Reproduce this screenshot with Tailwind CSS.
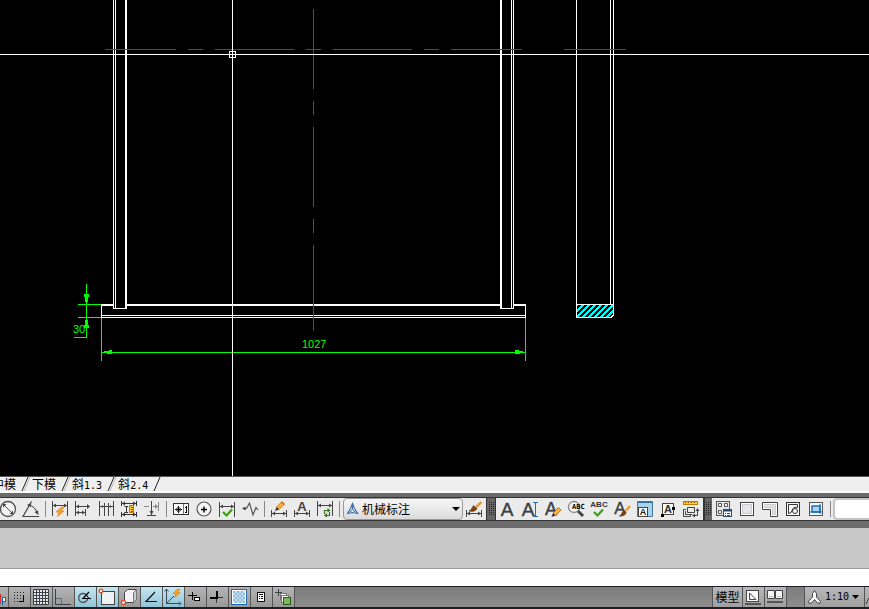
<!DOCTYPE html>
<html lang="zh">
<head>
  <meta charset="UTF-8">
  <title>CAD</title>
  <script src="https://cdn.jsdelivr.net/npm/@tailwindcss/browser@4"></script>
</head>
<body class="h-screen flex flex-col overflow-hidden bg-[#6b6b6b] text-black text-xs font-['Noto_Sans_CJK_SC',sans-serif]">

  <!-- Drawing area -->
  <main class="flex-1 min-h-0 bg-black overflow-hidden">
    <svg class="block w-full h-full" fill="none" shape-rendering="crispEdges">
      <defs>
        <pattern id="hatch" width="6" height="6" patternUnits="userSpaceOnUse">
          <path d="M-1 7L7 -1M-1 1L1 -1M5 7L7 5" stroke="#00ffff" stroke-width="1.500"/>
        </pattern>
      </defs>

      <!-- frame -->
      <g stroke="#fff">
        <path d="M113.5 0V308.5H126M115.5 0V308M511.5 0V308M513.5 0V308.5H501"/>
        <path d="M126 0V309M501 0V309M101 305H113M127 305H500M514 305H526" stroke-width="2"/>
        <path d="M101.5 304V317.5H525.5V304M101 315.5H525"/>
      </g>

      <!-- side section -->
      <rect x="577" y="305" width="36" height="12" fill="url(#hatch)"/>
      <path d="M576.5 0V317.5H611L613.5 315V0M610.5 0V304M576 304.5H613" stroke="#fff"/>

      <!-- centre lines -->
      <g stroke="#e01010">
        <path d="M105 49.5H176M188 49.5H203M215 49.5H294M306 49.5H321M333 49.5H412M424 49.5H439M451 49.5H522M564 49.5H626"/>
        <path d="M313.5 9V89M313.5 101V115M313.5 127V207M313.5 219V233M313.5 245V331"/>
      </g>

      <!-- dimensions -->
      <g stroke="#00ff00">
        <path d="M86.5 284V337.5H74M78 304.5H101M78 317.5H101M101.5 318V361M525.5 318V361M101 352.5H525"/>
      </g>
      <g fill="#00ff00">
        <path d="M84 294h5v3h-1v5h-3v-5h-1zM85 320h3v5h1v3h-5v-3h1z"/>
        <path d="M104 351h5v-1h3v4h-5v-1h-3zM523 351h-4v-1h-4v4h5v-1h3z"/>
      </g>
      <g fill="#00ff00" font-family="'Liberation Sans Narrow', 'Liberation Sans', sans-serif" font-size="11">
        <text x="73" y="333">30</text>
        <text x="302" y="348">1027</text>
      </g>

      <!-- crosshair -->
      <g stroke="#fff">
        <line x1="0" y1="54.5" x2="100%" y2="54.5"/>
        <line x1="232.5" y1="0" x2="232.5" y2="100%"/>
        <rect x="229.5" y="51.5" width="6" height="6"/>
      </g>
    </svg>
  </main>

  <!-- Layout tabs -->
  <nav class="h-[17px] shrink-0 flex items-center bg-[#efefef] border-t border-[#555] border-b-2 border-b-white leading-none overflow-hidden">
    <a href="#" class="-ml-2">中模</a>
    <svg class="w-4 h-[14px]" fill="none"><path d="M6 14L12 0" stroke="#222"/><path d="M8 14L14 0" stroke="#bbb"/></svg>
    <a href="#">下模</a>
    <svg class="w-4 h-[14px]" fill="none"><path d="M6 14L12 0" stroke="#222"/><path d="M8 14L14 0" stroke="#bbb"/></svg>
    <a href="#">斜<span class="text-[10px] font-['DejaVu_Sans_Mono',monospace]">1.3</span></a>
    <svg class="w-4 h-[14px]" fill="none"><path d="M6 14L12 0" stroke="#222"/><path d="M8 14L14 0" stroke="#bbb"/></svg>
    <a href="#">斜<span class="text-[10px] font-['DejaVu_Sans_Mono',monospace]">2.4</span></a>
    <svg class="w-4 h-[14px]" fill="none"><path d="M6 14L12 0" stroke="#222"/></svg>
  </nav>

  <!-- Toolbars -->
  <div class="h-6 mt-1 mb-[7px] shrink-0 flex overflow-hidden border-y border-[#333]">

    <!-- dimension toolbar -->
    <div role="toolbar" aria-label="标注" class="flex shrink-0 bg-[#ebebeb] border-r border-[#333]">
      <button aria-label="直径" class="-ml-1 w-[23px]"><svg class="block" width="23" height="22" fill="none" stroke="#555"><circle cx="12" cy="11" r="7.5" fill="#f4f4f4" stroke-width="1.3"/><path d="M7.5 6.5L16.5 15.5"/><path d="M7 6h3.5L7 9.500zM17 16h-3.500L17 12.500z" fill="#444" stroke="none"/></svg></button>
      <button aria-label="角度" class="w-[23px]"><svg class="block" width="23" height="22" fill="none" stroke="#444"><path d="M20 18.500H4L12.500 3.500" stroke-width="1.200"/><path d="M9.500 7Q16 8 18.500 15.500"/><path d="M8 7l4-2v4zM19.500 17l-4-3 3.500-1.500z" fill="#444" stroke="none"/></svg></button>
      <span class="w-px ml-[3px] mr-[2px] my-[3px] bg-[#888]"></span>
      <button aria-label="快速标注" class="w-[23px]"><svg class="block" width="23" height="22" fill="none" stroke="#444"><path d="M4.500 3V18M19.500 3V18M5 7.500H19"/><path d="M5 7.500l3-2v4zM19 7.500l-3-2v4z" fill="#444" stroke="none"/><path d="M13.500 9L8 14h3l-1.500 4.500L16 13h-3l3-4z" fill="#ffa51f" stroke="#e07000" stroke-width=".6"/></svg></button>
      <button aria-label="基线" class="w-[23px]"><svg class="block" width="23" height="22" fill="none" stroke="#444"><path d="M4.500 3V18M5 8.500H17M5 14.500H14M14.500 11V18"/><path d="M5 8.500l3-2v4zM19 8.500l-3-2.500v5zM5 14.500l3-2v4zM14 14.500l-3-2v4z" fill="#444" stroke="none"/></svg></button>
      <button aria-label="连续" class="w-[23px]"><svg class="block" width="23" height="22" fill="none" stroke="#444"><path d="M5.500 3V18M10.500 5V18M14.500 5V18M19.500 3V18M5 8.500H19"/><path d="M10 8.500l-2-1.500v3zM15 8.500l2-1.500v3z" fill="#444" stroke="none"/></svg></button>
      <button aria-label="标注间距" class="w-[23px]"><svg class="block" width="23" height="22" fill="none" stroke="#333"><path d="M4.500 3V8M19.500 3V8M5 5.500H19M4.500 14V19M19.500 14V19M5 16.500H19M7.500 8.500H11M9.500 8.500V14M7.500 14.500H11"/><path d="M5 5.500l3-2v4zM19 5.500l-3-2v4zM5 16.500l3-2v4zM19 16.500l-3-2v4z" fill="#333" stroke="none"/><rect x="12.500" y="7.500" width="4" height="7" fill="#ffc61a" stroke="#c07a00"/><path d="M14 9.500h2M14 11.500h2M14 13.500h2" stroke="#815000"/></svg></button>
      <button aria-label="折断标注" class="w-[23px]"><svg class="block" width="23" height="22" fill="none" stroke="#888"><path d="M4 8.500H9M13 8.500H18M18.500 4V13"/><path d="M18 8.500l-3-2.500v5z" fill="#888" stroke="none"/><path d="M11.500 3V17M7 17.500H16" stroke="#444"/><path d="M11.500 17l-2-4h4z" fill="#444" stroke="none"/></svg></button>
      <span class="w-px ml-[3px] mr-[2px] my-[3px] bg-[#888]"></span>
      <button aria-label="公差" class="w-[23px]"><svg class="block" width="23" height="22" fill="none" stroke="#333"><rect x="4.500" y="5.500" width="15" height="11" fill="#fafafa"/><path d="M14.500 6V16" stroke="#777"/><path d="M6 11.500H13M9.500 8V15" stroke="#000"/><circle cx="9.500" cy="11.500" r="2"/><path d="M16 14.500h1M17.500 8V15M16 9.500h1" stroke="#000"/></svg></button>
      <button aria-label="圆心标记" class="w-[23px]"><svg class="block" width="23" height="22" fill="none"><circle cx="12" cy="11" r="7" fill="#f4f4f4" stroke="#555" stroke-width="1.200"/><path d="M9 11.500H15M12 8.500V14.500" stroke="#000" stroke-width="1.400"/></svg></button>
      <button aria-label="检验" class="w-[23px]"><svg class="block" width="23" height="22" fill="none" stroke="#444"><path d="M4.500 4V19M19.500 4V19M5 8.500H19"/><path d="M5 8.500l3-2v4zM19 8.500l-3-2v4z" fill="#444" stroke="none"/><path d="M8 14l3.500 3.500L17 11.500" stroke="#3aa010" stroke-width="2.200"/></svg></button>
      <button aria-label="折弯线性" class="w-[23px]"><svg class="block" width="23" height="22" fill="none" stroke="#555"><path d="M6 10.500H8.500L11.500 5L15 17L18 9.500L20 12" stroke-width="1.200"/><path d="M4 10.500l3.500-2v4z" fill="#444" stroke="none"/></svg></button>
      <span class="w-px ml-[3px] mr-[2px] my-[3px] bg-[#888]"></span>
      <button aria-label="编辑标注" class="w-[23px]"><svg class="block" width="23" height="22" fill="none" stroke="#444"><path d="M4.500 12V19M19.500 12V19M5 15.500H19"/><path d="M5 15.500l3-2v4zM19 15.500l-3-2v4z" fill="#444" stroke="none"/><path d="M9.500 9L15 3.500l2.500 2.500L12 11.500z" fill="#ffb13b" stroke="#b06a10" stroke-width=".8"/><path d="M9.500 9L8 13l4-1.500z" fill="#333" stroke="none"/><path d="M14.500 4l2.500 2.500" stroke="#b53a20"/></svg></button>
      <button aria-label="编辑标注文字" class="w-[23px]"><svg class="block" width="23" height="22" fill="none" stroke="#444"><path d="M4.500 12V19M19.500 12V19M5 15.500H19"/><path d="M5 15.500l3-2v4zM19 15.500l-3-2v4z" fill="#444" stroke="none"/><text x="12" y="13" text-anchor="middle" font-family="Liberation Sans" font-weight="bold" font-size="13" fill="#444" stroke="none">A</text></svg></button>
      <button aria-label="标注更新" class="w-[23px]"><svg class="block" width="23" height="22" fill="none" stroke="#444"><path d="M4.500 3V18M19.500 3V18M5 7.500H19"/><path d="M5 7.500l3-2v4zM19 7.500l-3-2v4z" fill="#444" stroke="none"/><path d="M11.500 16V12.500H15M13 17.500H16.500V14" stroke="#35701a" stroke-width="1.200"/><path d="M14.500 10l3 2.500-3 2zM14 15l-3 2.500 3 2z" fill="#35701a" stroke="none"/></svg></button>
      <span class="w-px ml-[3px] mr-[3px] my-[3px] bg-[#888]"></span>
      <div class="relative w-[120px]">
        <select aria-label="标注样式" class="block appearance-none w-full h-[22px] pl-[18px] border border-[#999] rounded-sm bg-linear-to-b from-[#f6f6f6] to-[#dcdcdc] text-xs leading-4">
          <option>机械标注</option>
        </select>
        <svg class="absolute left-1 top-1 pointer-events-none" width="14" height="14" fill="none" stroke="#3a6ea5"><path d="M5.500 1.500L3.500 6.500L.5 11.500L5.500 10.500L10.500 11.500L7.500 6.500Z" fill="#dcebf7" stroke-width="1.200"/><path d="M5.500 4V7.500L3 10M5.500 7.500L8 10"/></svg>
        <svg class="absolute right-[3px] top-[9px] pointer-events-none" width="8" height="4"><path d="M0 0H8L4 4z"/></svg>
      </div>
      <button aria-label="标注样式管理" class="w-[23px]"><svg class="block" width="23" height="22" fill="none" stroke="#444"><path d="M3.500 12V19M18.500 12V19M4 15.500H18"/><path d="M4 15.500l3-2v4zM18 15.500l-3-2v4z" fill="#444" stroke="none"/><path d="M18.500 4L13 9" stroke="#e39a3b" stroke-width="2.600"/><path d="M10.500 7.500l3.500 3q-2 4-8 2.500 2.500-1 4.500-5.500z" fill="#7a4318" stroke="#5b2e0c" stroke-width=".6"/></svg></button>
    </div>

    <span class="w-[9px] shrink-0 flex items-center justify-center bg-[#666] border-r border-[#333]"><svg width="5" height="16" stroke="#222" stroke-width="1"><path d="M.5 1V14M2.500 1V14M4.500 1V14" stroke-dasharray="1 1"/></svg></span>

    <!-- text toolbar -->
    <div role="toolbar" aria-label="文字" class="flex shrink-0 bg-[#ebebeb]">
      <button aria-label="多行文字" class="w-[23px]"><svg class="block" width="23" height="22"><text x="11" y="18" text-anchor="middle" font-family="Liberation Sans" font-size="19" fill="#3a3f44" stroke="#3a3f44" stroke-width=".4">A</text></svg></button>
      <button aria-label="单行文字" class="w-[23px]"><svg class="block" width="23" height="22" fill="none"><text x="9" y="18" text-anchor="middle" font-family="Liberation Sans" font-size="19" fill="#3a3f44" stroke="#3a3f44" stroke-width=".4">A</text><path d="M14 4.500H19M14 18.500H19M16.500 5V18" stroke="#1f6fb8"/></svg></button>
      <button aria-label="编辑文字" class="w-[23px]"><svg class="block" width="23" height="22"><text x="9" y="17" text-anchor="middle" font-family="Liberation Sans" font-size="18" fill="#3a3f44" stroke="#3a3f44" stroke-width=".4">A</text><path d="M11 15L16.500 9.500l2.500 2.500L13.500 17.500z" fill="#ffb13b" stroke="#9a5a10" stroke-width=".8"/><path d="M11 15L9.500 19l4-1.500z" fill="#333"/></svg></button>
      <button aria-label="查找" class="w-[23px]"><svg class="block" width="23" height="22" fill="none"><circle cx="9" cy="9" r="5.500" fill="#f4f8fb" stroke="#888" stroke-width="1.300"/><path d="M13 13L18 18" stroke="#444" stroke-width="3"/><text x="7" y="11" font-family="DejaVu Sans Mono" font-weight="bold" font-size="7" fill="#000">ABC</text></svg></button>
      <button aria-label="拼写检查" class="w-[23px]"><svg class="block" width="23" height="22" fill="none"><text x="11" y="9" text-anchor="middle" font-family="Liberation Sans" font-weight="bold" font-size="8" fill="#333">ABC</text><path d="M6 14l3.500 3.500L15 11.500" stroke="#3aa010" stroke-width="2.200"/></svg></button>
      <button aria-label="文字样式" class="w-[23px]"><svg class="block" width="23" height="22"><text x="9" y="16" text-anchor="middle" font-family="Liberation Sans" font-size="17" fill="#3a3f44" stroke="#3a3f44" stroke-width=".4">A</text><path d="M19 8L15 12.500" stroke="#e39a3b" stroke-width="2.400"/><path d="M12.500 11.500l3 2.500q-1 5-8 4.500 3-2 5-7z" fill="#7a4318"/></svg></button>
      <button aria-label="缩放文字" class="w-[23px]"><svg class="block" width="23" height="22"><path d="M3.500 3.500H18.500V18.500H3.500z" fill="#a9d3ea" stroke="#47799b"/><path d="M4 4.500H18" stroke="#2f6f9a"/><rect x="4.500" y="9.500" width="9" height="9" fill="#fff" stroke="#444"/><text x="9" y="17" text-anchor="middle" font-family="Liberation Sans" font-weight="bold" font-size="9" fill="#222">A</text></svg></button>
      <button aria-label="对正文字" class="w-[23px]"><svg class="block" width="23" height="22"><rect x="5.500" y="5.500" width="11" height="11" fill="#f8f8f8" stroke="#444"/><text x="11" y="15" text-anchor="middle" font-family="Liberation Sans" font-weight="bold" font-size="11" fill="#333">A</text><path d="M4 16h3v3h-3zM15 9h3v3h-3z"/></svg></button>
      <button aria-label="空间转换" class="w-[23px]"><svg class="block" width="23" height="22" fill="none"><rect x="3.500" y="3.500" width="14" height="3" fill="#ffcf2e" stroke="#c27a00"/><path d="M5.500 4v1M8.500 4v1M11.500 4v1M14.500 4v1" stroke="#754700"/><path d="M6 11.500H3.500V18.500H10.500V16M5.500 13V16.500H12M7.500 9.500H14.500V14.500H7.500zM17.500 12V17.500H14" stroke="#444"/><path d="M17.500 10l2 3h-4zM12 17.500l3-2v4z" fill="#444"/></svg></button>
    </div>

    <span class="w-[9px] shrink-0 flex items-center justify-center bg-[#666] border-l-2 border-[#333]"><svg width="5" height="16" stroke="#222" stroke-width="1"><path d="M.5 1V14M2.500 1V14M4.500 1V14" stroke-dasharray="1 1"/></svg></span>

    <!-- viewport toolbar -->
    <div role="toolbar" aria-label="视口" class="flex flex-1 min-w-0 bg-[#ebebeb]">
      <button aria-label="视口对话框" class="w-[23px] shrink-0"><svg class="block" width="23" height="22" fill="#fafafa" stroke="#555"><rect x="4.500" y="3.500" width="13" height="14" fill="#e6e6e6"/><path d="M6.500 5.500h3v3h-3zM12.500 5.500h3v3h-3zM6.500 12.500h3v3h-3z"/><rect x="11.500" y="11.500" width="8" height="7" stroke="#2d4d70"/><path d="M11 12.500H20" stroke="#2d4d70" stroke-width="2"/><path d="M13 15.500h1M15 15.500h3M13 17.500h1M15 17.500h3" stroke="#444"/></svg></button>
      <button aria-label="单个视口" class="w-[23px] shrink-0"><svg class="block" width="23" height="22"><rect x="5.500" y="4.500" width="13" height="13" fill="#fff" stroke="#444"/><rect x="7.500" y="6.500" width="9" height="9" fill="#e4e6ea" stroke="#ccc"/></svg></button>
      <button aria-label="多边形视口" class="w-[23px] shrink-0"><svg class="block" width="23" height="22"><path d="M4.500 4.500H19.500V18.500H12.500V11.500H4.500z" fill="#fff" stroke="#444"/><path d="M6.500 6.500H17.500V16.500H14.500V9.500H6.500z" fill="#dde0e5" stroke="#ccc"/></svg></button>
      <button aria-label="将对象转换为视口" class="w-[23px] shrink-0"><svg class="block" width="23" height="22" fill="none" stroke="#333"><rect x="5.500" y="4.500" width="13" height="13" fill="#fafafa"/><path d="M7.500 15.500V6.500H16.500V9.500Q12 8.500 11 12.500Q10.500 15.500 7.500 15.500z"/><circle cx="14" cy="13" r="2.500"/></svg></button>
      <button aria-label="裁剪现有视口" class="w-[23px] shrink-0"><svg class="block" width="23" height="22" fill="none"><rect x="5.500" y="4.500" width="13" height="13" fill="#fafafa" stroke="#555"/><rect x="8" y="8" width="8" height="6" fill="#a8d4f0" stroke="#1266b0" stroke-width="1.400"/><path d="M6 14H18M16 6V16" stroke="#1266b0"/></svg></button>
      <span class="w-px ml-[3px] mr-[2px] my-[3px] bg-[#888] shrink-0"></span>
      <input type="text" aria-label="视口比例" class="h-[22px] flex-1 min-w-0 -mr-1 bg-white border-2 border-[#c4c4c4] rounded-sm">
    </div>
  </div>

  <!-- Command window -->
  <div class="h-[41px] shrink-0 bg-[#c8c8c8] border-b border-[#999]"></div>
  <input type="text" aria-label="命令" class="block w-full h-[17px] shrink-0 bg-white outline-none">

  <!-- Status bar -->
  <footer class="h-[23px] shrink-0 flex justify-between overflow-hidden border-t border-b-2 border-[#1c1f24] bg-linear-to-b from-[#7c7c7c] to-[#8e8e8e]">
    <div class="flex -ml-[13px]">
      <button aria-label="推断约束" class="w-[22px] border-r border-[#555] bg-linear-to-b from-[#b4b4b4] to-[#989898]"><svg class="block" width="22" height="20" fill="none"><path d="M12 9.500H15M13.500 7V17" stroke="#c33"/><path d="M15.500 10.500h3v4h-3zM15.500 14V18" stroke="#1266b0" fill="#fff"/></svg></button>
      <button aria-label="捕捉" class="w-[22px] border-r border-[#555] bg-linear-to-b from-[#b4b4b4] to-[#989898]"><svg class="block" width="22" height="20" fill="none" stroke="#222"><path d="M5 5.500H15M5 8.500H13M5 11.500H13M5 14.500H9" stroke-dasharray="1 2"/><path d="M14.500 8V15M10 14.500H15" stroke="#000"/></svg></button>
      <button aria-label="栅格" class="w-[22px] border-r border-[#555] bg-linear-to-b from-[#b4b4b4] to-[#989898]"><svg class="block" width="22" height="20" fill="#e8e8e8" stroke="#3b3f47"><path d="M2.500 2.500h15v15h-15zM5.500 2v16M8.500 2v16M11.500 2v16M14.500 2v16M2 5.500h16M2 8.500h16M2 11.500h16M2 14.500h16"/></svg></button>
      <button aria-label="正交" class="w-[22px] border-r border-[#555] bg-linear-to-b from-[#b4b4b4] to-[#989898]"><svg class="block" width="22" height="20" fill="none" stroke="#3b3f47"><path d="M2.500 2V17.500H18"/><path d="M3 11.500H8.500V17" stroke="#667"/></svg></button>
      <button aria-label="极轴" class="w-[22px] border-r border-[#555] bg-linear-to-b from-[#c5e6f1] to-[#8fc4d6]"><svg class="block" width="22" height="20" fill="none"><path d="M11 7.500A4.500 4.500 0 1 0 12.500 12" stroke="#555" stroke-width="1.400"/><path d="M14 5L8 11.500H16" stroke="#000" stroke-width="1.200"/><path d="M11 7.500l3 4" stroke="#000"/></svg></button>
      <button aria-label="对象捕捉" class="w-[22px] border-r border-[#555] bg-linear-to-b from-[#c5e6f1] to-[#8fc4d6]"><svg class="block" width="22" height="20"><rect x="4.500" y="4.500" width="13" height="13" fill="#f0f1f3" stroke="#444"/><circle cx="4" cy="4" r="1.800" fill="#fff" stroke="#e0491a" stroke-width="1.300"/></svg></button>
      <button aria-label="三维对象捕捉" class="w-[22px] border-r border-[#555] bg-linear-to-b from-[#b4b4b4] to-[#989898]"><svg class="block" width="22" height="20" stroke="#444"><path d="M5.500 5.500L8.500 2.500H17.500V12.500L14.500 15.500H5.500z" fill="#f4f4f6"/><path d="M14.500 15.500V5.500L17.500 2.500V12.500z" fill="#c9ccd2" stroke="#777"/><circle cx="4.500" cy="15.500" r="2" fill="#fff" stroke="#e0491a" stroke-width="1.300"/></svg></button>
      <button aria-label="对象追踪" class="w-[22px] border-r border-[#555] bg-linear-to-b from-[#c5e6f1] to-[#8fc4d6]"><svg class="block" width="22" height="20" fill="none" stroke="#111"><path d="M14 5L5 14.500H16" stroke-width="1.200"/></svg></button>
      <button aria-label="动态UCS" class="w-[22px] border-r border-[#555] bg-linear-to-b from-[#c5e6f1] to-[#8fc4d6]"><svg class="block" width="22" height="20" fill="none" stroke="#3b4650"><path d="M3.500 3V16.500H17M3.500 16.500L11 9M1.500 4.500l2-2.500 2 2.500M16 14.500l2 2-2 2"/><path d="M14.500 2L10 6.500h3l-1 4 5-5h-2.500l2.500-3z" fill="#ffa51f" stroke="#e07000" stroke-width=".6"/></svg></button>
      <button aria-label="动态输入" class="w-[22px] border-r border-[#555] bg-linear-to-b from-[#b4b4b4] to-[#989898]"><svg class="block" width="22" height="20" fill="none" stroke="#000"><path d="M7.500 5V13M3 8.500H12"/><rect x="9.500" y="10.500" width="5" height="3" fill="#fff"/></svg></button>
      <button aria-label="线宽" class="w-[22px] border-r border-[#555] bg-linear-to-b from-[#b4b4b4] to-[#989898]"><svg class="block" width="22" height="20" fill="none"><path d="M9.500 10V16M10 10.500H16" stroke="#333"/><path d="M10 4V11H3" stroke="#000" stroke-width="2"/></svg></button>
      <button aria-label="透明度" class="w-[22px] border-r border-[#555] bg-linear-to-b from-[#b4b4b4] to-[#989898]"><svg class="block" width="22" height="20"><defs><pattern id="check" x="4" y="4" width="4" height="4" patternUnits="userSpaceOnUse"><path fill="#c4def0" d="M0 0h4v4H0z"/><path fill="#8fbedd" d="M0 0h2v2H0zM2 2h2v2H2z"/></pattern></defs><rect x="2.500" y="2.500" width="15" height="15" fill="#fff" stroke="#2468ae"/><path d="M4 4h12v12H4z" fill="url(#check)"/></svg></button>
      <button aria-label="快捷特性" class="w-[22px] border-r border-[#555] bg-linear-to-b from-[#b4b4b4] to-[#989898]"><svg class="block" width="22" height="20" fill="#fff" stroke="#111"><rect x="6.500" y="5.500" width="7" height="9"/><path d="M8 7.500H12M8 9.500h1M10 9.500h2M8 11.500h1M10 11.500h2"/></svg></button>
      <button aria-label="选择循环" class="w-[22px] border-r border-[#555] bg-linear-to-b from-[#b4b4b4] to-[#989898]"><svg class="block" width="22" height="20" fill="none" stroke="#3b3f47"><path d="M5.500 2V9M2 5.500H9"/><rect x="7.500" y="6.500" width="6" height="6" fill="#fff" stroke="#777"/><rect x="8.500" y="8.500" width="7" height="7" fill="#fff" stroke="#777"/><rect x="10.500" y="10.500" width="7" height="7" fill="#7db562" stroke="#285c18"/></svg></button>
    </div>

    <div class="flex">
      <button class="w-[31px] border-x border-[#555] bg-linear-to-b from-[#b8b8b8] to-[#a0a0a0] leading-5">模型</button>
      <button aria-label="快速查看布局" class="w-[22px] border-r border-[#555] bg-linear-to-b from-[#b8b8b8] to-[#a0a0a0]"><svg class="block" width="22" height="20" fill="none" stroke="#444"><rect x="3.500" y="3.500" width="12" height="11" fill="#fafafa"/><path d="M6.500 6V12.500H13z"/><path d="M2 17H18" stroke-width="2" stroke="#555"/></svg></button>
      <button aria-label="快速查看图形" class="w-[22px] border-r border-[#555] bg-linear-to-b from-[#b8b8b8] to-[#a0a0a0]"><svg class="block" width="22" height="20" fill="#f4f4f4" stroke="#444"><path d="M2.500 3.500h7v8h-7zM10.500 3.500h7v8h-7z"/><path d="M4 9.500h4M12 9.500h4" stroke="#bbb"/><path d="M2 15H18" stroke-width="2" stroke="#555"/></svg></button>
      <button aria-label="注释比例" class="ml-[17px] w-[61px] flex items-center gap-[3px] pl-[2px] border-x border-[#555] bg-linear-to-b from-[#b8b8b8] to-[#a0a0a0] text-[10px] font-['DejaVu_Sans_Mono',monospace]">
        <svg class="shrink-0" width="15" height="16" fill="#fafafa" stroke="#444"><path d="M7.500 1.500L9.500 4.500V8L13.500 12.500L13 14.500L10 13.500L7.500 10.500L5 13.500L2 14.500L1.500 12.500L5.500 8V4.500z"/></svg>
        <span>1:10</span>
        <svg class="shrink-0" width="7" height="4"><path d="M0 0H7L3.500 4z"/></svg>
      </button>
      <button aria-label="注释可见性" class="w-1 overflow-hidden bg-linear-to-b from-[#b8b8b8] to-[#a0a0a0]"><svg class="block" width="4" height="20" fill="none" stroke="#444"><path d="M1 17L4 11"/></svg></button>
    </div>
  </footer>

</body>
</html>
